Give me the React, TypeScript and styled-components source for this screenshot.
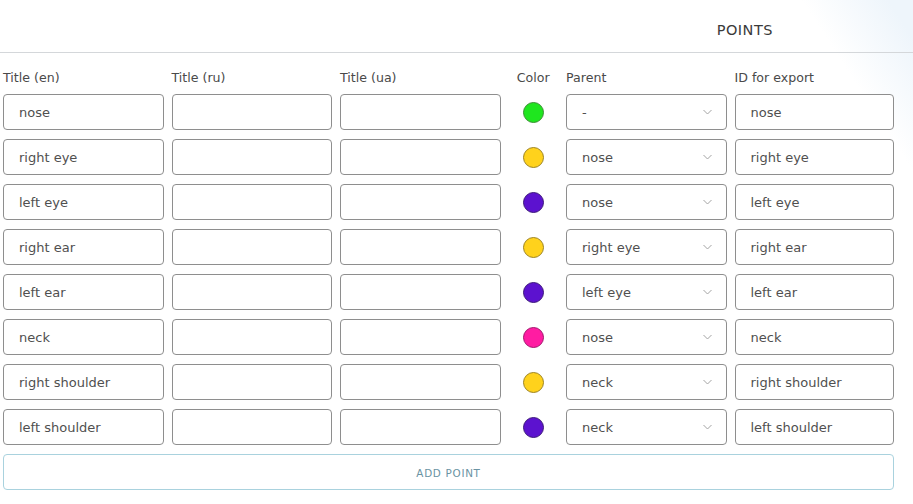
import * as React from "react";
import styled, { createGlobalStyle } from "styled-components";

const GlobalStyle = createGlobalStyle`
    html, body {
        margin: 0;
        padding: 0;
        height: 100%;
    }
    body {
        font-family: "DejaVu Sans", "Liberation Sans", sans-serif;
        color: #4d4d4d;
    }
`;

const Page = styled.div`
    min-height: 100vh;
    box-sizing: border-box;
    background: linear-gradient(57deg, #ffffff 91%, #eef5fb 98%);
`;

const TopBar = styled.header`
    height: 52px;
    display: flex;
    align-items: center;
    justify-content: flex-end;
    padding-right: 140px;
    border-bottom: 1px solid #d4d7da;
`;

const Title = styled.h1`
    margin: 0;
    padding-top: 8px;
    font-size: 14.5px;
    font-weight: normal;
    letter-spacing: 0.5px;
    color: #3a3a3a;
`;

const Table = styled.div`
    display: grid;
    grid-template-columns: 160.5px 160.5px 160.5px 49.5px 160.5px 159.5px;
    column-gap: 8px;
    row-gap: 9px;
    padding: 16px 0 0 3px;
`;

const Label = styled.div<{ $center?: boolean }>`
    height: 16px;
    line-height: 17px;
    font-size: 12.6px;
    color: #4a4a4a;
    white-space: nowrap;
    text-align: ${(p) => (p.$center ? "center" : "left")};
`;

const TextInput = styled.input`
    box-sizing: border-box;
    width: 100%;
    height: 36px;
    margin: 0;
    padding: 0 15px;
    border: 1px solid #8e8e8e;
    border-radius: 4px;
    background: #fff;
    font-family: inherit;
    font-size: 13px;
    color: #505050;
    outline: none;
`;

const Swatch = styled.div`
    display: flex;
    align-items: center;
    justify-content: center;
`;

const Dot = styled.span<{ $fill: string; $edge: string }>`
    width: 21px;
    height: 21px;
    border-radius: 50%;
    box-sizing: border-box;
    background: ${(p) => p.$fill};
    border: 1px solid ${(p) => p.$edge};
`;

const SelectBox = styled.div`
    box-sizing: border-box;
    height: 36px;
    display: flex;
    align-items: center;
    justify-content: space-between;
    padding: 0 14px 0 15px;
    border: 1px solid #8e8e8e;
    border-radius: 4px;
    background: #fff;
    font-size: 13px;
    color: #505050;
`;

const Chevron = styled.svg`
    width: 9px;
    height: 6px;
    flex: none;
`;

const AddButton = styled.button`
    grid-column: 1 / -1;
    height: 36px;
    margin: 0;
    padding-top: 2px;
    border: 1px solid #a9d2de;
    border-radius: 4px;
    background: #fff;
    font-family: inherit;
    font-size: 10.4px;
    letter-spacing: 0.7px;
    color: #6a93a3;
    cursor: pointer;
`;

type Point = {
    en: string;
    parent: string;
    fill: string;
    edge: string;
};

const green = { fill: "#1fe61f", edge: "#3b8f34" };
const yellow = { fill: "#ffd21c", edge: "#9d8423" };
const purple = { fill: "#5c12cf", edge: "#3d1a7a" };
const pink = { fill: "#ff1ca2", edge: "#a2166d" };

const points: Point[] = [
    { en: "nose", parent: "-", ...green },
    { en: "right eye", parent: "nose", ...yellow },
    { en: "left eye", parent: "nose", ...purple },
    { en: "right ear", parent: "right eye", ...yellow },
    { en: "left ear", parent: "left eye", ...purple },
    { en: "neck", parent: "nose", ...pink },
    { en: "right shoulder", parent: "neck", ...yellow },
    { en: "left shoulder", parent: "neck", ...purple },
];

const Select: React.FC<{ value: string }> = ({ value }) => (
    <SelectBox>
        <span>{value}</span>
        <Chevron viewBox="0 0 9 6">
            <path d="M0.5 1 L4.5 5 L8.5 1" fill="none" stroke="#a3a3a3" strokeWidth="1" />
        </Chevron>
    </SelectBox>
);

export default function App() {
    return (
        <Page>
            <GlobalStyle />
            <TopBar>
                <Title>POINTS</Title>
            </TopBar>
            <Table>
                <Label>Title (en)</Label>
                <Label>Title (ru)</Label>
                <Label>Title (ua)</Label>
                <Label $center>Color</Label>
                <Label>Parent</Label>
                <Label>ID for export</Label>
                {points.map((p) => (
                    <React.Fragment key={p.en}>
                        <TextInput defaultValue={p.en} />
                        <TextInput defaultValue="" />
                        <TextInput defaultValue="" />
                        <Swatch>
                            <Dot $fill={p.fill} $edge={p.edge} />
                        </Swatch>
                        <Select value={p.parent} />
                        <TextInput defaultValue={p.en} />
                    </React.Fragment>
                ))}
                <AddButton>ADD POINT</AddButton>
            </Table>
        </Page>
    );
}
